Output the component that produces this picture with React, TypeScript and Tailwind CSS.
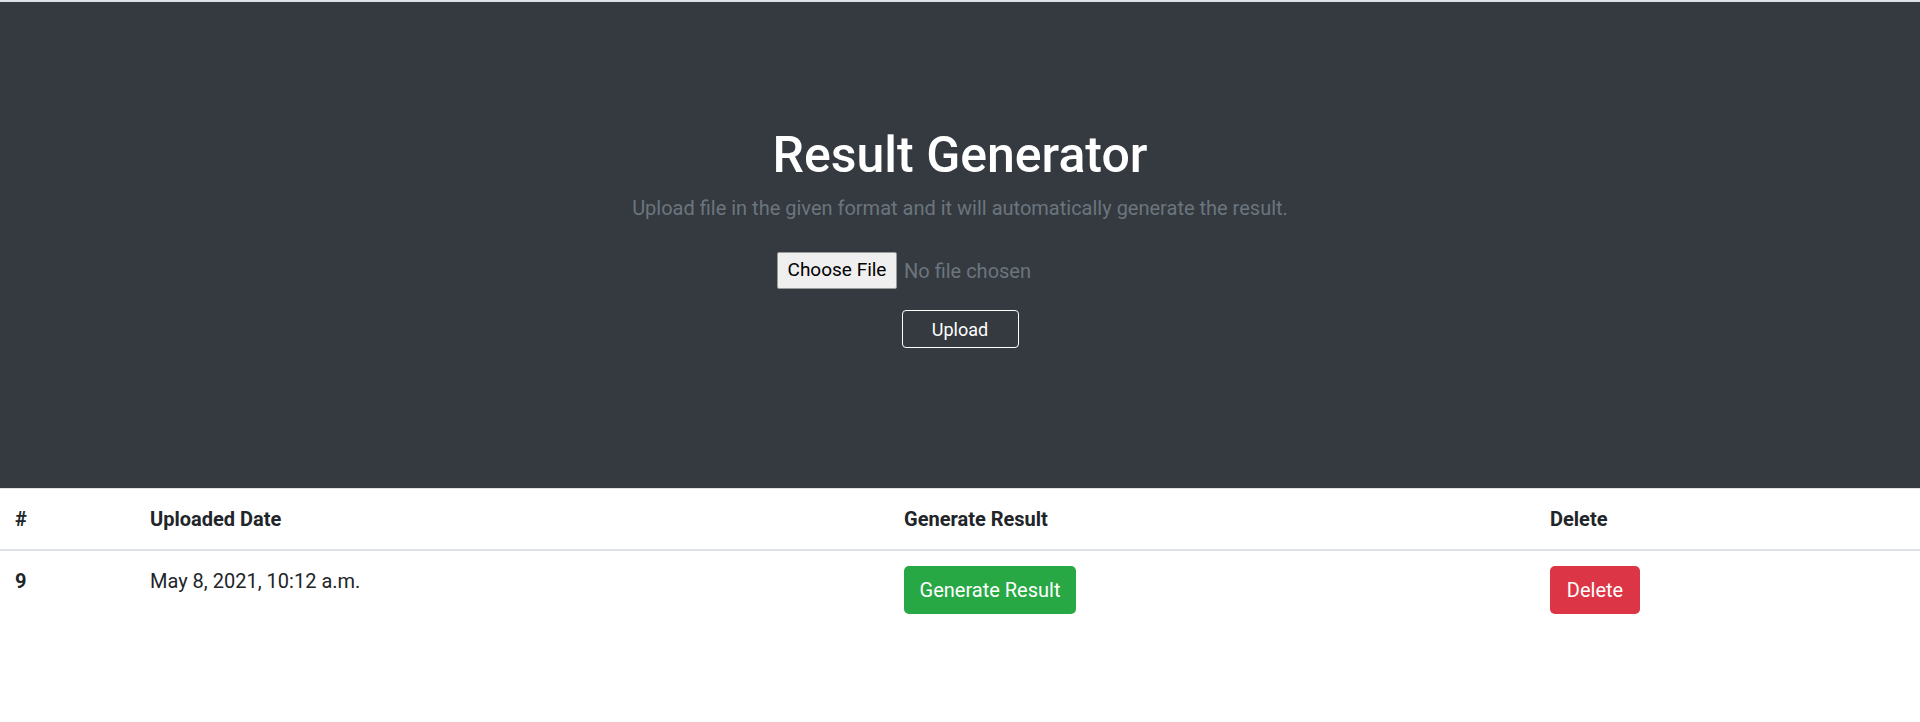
import React from "react";

const rows = [{ id: 9, uploaded: "May 8, 2021, 10:12 a.m." }];

const App = () => {
  return (
    <div className="min-h-[722px] bg-white font-['Roboto',sans-serif] text-[#212529]">
      <div className="h-[2px] bg-[#dee2e6]" />

      <section className="h-[486px] bg-[#343a40] pt-[123px] flex flex-col items-center">
        <h1 className="text-[50px] leading-[60px] font-medium text-white">Result Generator</h1>
        <p className="mt-[8px] text-[20px] leading-[30px] text-[#6c757d]">
          Upload file in the given format and it will automatically generate the result.
        </p>

        <div className="mt-[29px] w-[366px] flex items-center gap-[7px]">
          <button className="h-[37px] w-[120px] bg-[#efefef] border border-[#9a9a9a] rounded-[2px] text-[19px] text-black">
            Choose File
          </button>
          <span className="text-[20px] text-[#6c757d]">No file chosen</span>
        </div>

        <button className="mt-[21px] h-[38px] w-[117px] border border-white rounded-[4px] text-[18px] text-white">
          Upload
        </button>
      </section>

      <table className="w-full table-fixed border-collapse text-[20px] leading-[30px]">
        <thead>
          <tr className="border-t border-[#dee2e6] border-b-2">
            <th className="w-[135px] p-[15px] text-left font-bold">#</th>
            <th className="w-[754px] p-[15px] text-left font-bold">Uploaded Date</th>
            <th className="w-[646px] p-[15px] text-left font-bold">Generate Result</th>
            <th className="p-[15px] text-left font-bold">Delete</th>
          </tr>
        </thead>
        <tbody>
          {rows.map((row) => (
            <tr key={row.id}>
              <td className="p-[15px] align-top font-bold">{row.id}</td>
              <td className="p-[15px] align-top">{row.uploaded}</td>
              <td className="p-[15px] align-top">
                <button className="h-[48px] w-[172px] rounded-[5px] bg-[#28a745] text-white">
                  Generate Result
                </button>
              </td>
              <td className="p-[15px] align-top">
                <button className="h-[48px] w-[90px] rounded-[5px] bg-[#dc3545] text-white">
                  Delete
                </button>
              </td>
            </tr>
          ))}
        </tbody>
      </table>
    </div>
  );
};

export default App;
